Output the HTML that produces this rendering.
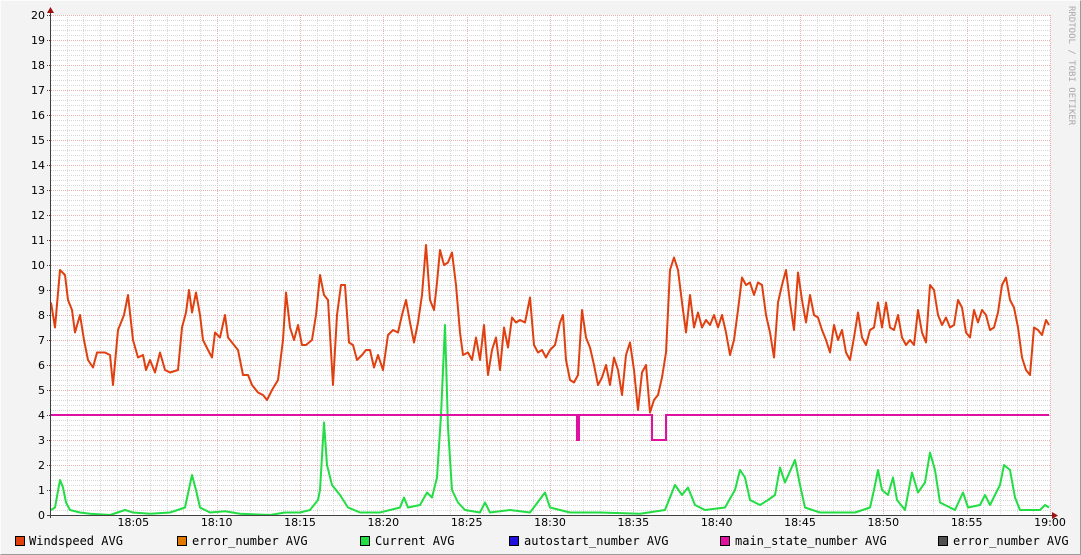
<!DOCTYPE html>
<html><head><meta charset="utf-8"><style>
html,body{margin:0;padding:0;background:#f3f3f3;}
svg{display:block}
</style></head><body>
<svg id="s" width="1081" height="555" xmlns="http://www.w3.org/2000/svg" font-family="DejaVu Sans, Liberation Sans, sans-serif">
<rect x="0" y="0" width="1081" height="555" fill="#f3f3f3"/>
<path d="M0.5 554.5V0.5H1080.5" fill="none" stroke="#fcfcfc"/>
<path d="M0.5 554.5H1080.5V0.5" fill="none" stroke="#9b9b9b"/>
<rect x="51" y="15" width="999" height="500" fill="#ffffff"/>
<g id="grid"></g>
<g transform="translate(0,515) scale(1,-25)" fill="none" stroke-width="2" stroke-linejoin="round">
<polyline vector-effect="non-scaling-stroke" stroke="#e04010" points="51,8.5 55,7.5 60,9.8 65,9.6 68,8.6 72,8.2 75,7.3 80,8 84,7 88,6.2 93,5.9 97,6.5 105,6.5 110,6.4 113,5.2 118,7.4 124,8 128,8.8 133,7 138,6.3 143,6.4 146,5.8 150,6.2 155,5.7 160,6.5 165,5.8 170,5.7 178,5.8 182,7.5 186,8.1 189,9 192,8.1 196,8.9 200,8 203,7 208,6.6 212,6.3 215,7.3 220,7.1 225,8 228,7.1 232,6.9 238,6.6 243,5.6 248,5.6 252,5.2 258,4.9 263,4.8 267,4.6 272,5 278,5.4 283,7 286,8.9 290,7.5 294,7 298,7.6 302,6.8 306,6.8 312,7 316,8 320,9.6 324,8.8 328,8.6 333,5.2 337,8 341,9.2 345,9.2 349,6.9 353,6.8 357,6.2 362,6.4 366,6.6 370,6.6 374,5.9 378,6.4 383,5.8 388,7.2 393,7.4 398,7.3 402,8 406,8.6 410,7.7 414,6.9 418,7.7 422,8.8 426,10.8 430,8.6 434,8.2 437,9.3 440,10.6 444,10 448,10.1 452,10.5 456,9.2 460,7.3 463,6.4 468,6.5 472,6.2 476,7.1 480,6.2 484,7.6 488,5.6 492,6.6 496,7.1 500,5.8 504,7.5 508,6.7 512,7.9 516,7.7 520,7.8 525,7.7 530,8.7 534,6.8 538,6.5 542,6.6 546,6.3 550,6.6 555,6.8 560,7.7 563,8 566,6.2 570,5.4 574,5.3 578,5.6 582,8.2 586,7.1 590,6.7 594,6 598,5.2 602,5.5 606,6 610,5.2 614,6.3 618,5.8 622,4.8 626,6.4 630,6.9 634,5.8 638,4.2 642,5.7 646,6 650,4.1 654,4.6 658,4.8 662,5.5 666,6.5 670,9.8 674,10.3 678,9.8 682,8.5 686,7.3 690,8.8 694,7.5 698,8.1 702,7.5 706,7.8 710,7.6 714,8 718,7.5 722,8 726,7.3 730,6.4 734,7 738,8.2 742,9.5 746,9.2 750,9.3 754,8.8 758,9.3 762,9.2 766,8 770,7.3 774,6.3 778,8.5 782,9.2 786,9.8 790,8.5 794,7.4 798,9.7 802,8.6 806,7.7 810,8.8 814,8 818,7.9 822,7.4 826,7 830,6.5 834,7.6 838,7 842,7.4 846,6.5 850,6.2 854,7.1 858,8.1 862,7.1 866,6.8 870,7.4 874,7.5 878,8.5 882,7.5 886,8.5 890,7.5 894,7.4 898,8 902,7.1 906,6.8 910,7 914,6.8 918,8.2 922,7.3 926,6.9 930,9.2 934,9 938,8 942,7.6 946,7.9 950,7.5 954,7.6 958,8.6 962,8.3 966,7.3 970,7.1 974,8.2 978,7.7 982,8.2 986,8 990,7.4 994,7.5 998,8.1 1002,9.2 1006,9.5 1010,8.6 1014,8.3 1018,7.5 1022,6.3 1026,5.8 1030,5.6 1034,7.5 1038,7.4 1042,7.2 1046,7.8 1049,7.6"/>
<polyline vector-effect="non-scaling-stroke" stroke="#22dd44" points="51,0.2 55,0.3 60,1.4 63,1.1 66,0.5 70,0.2 80,0.1 90,0.05 110,0 125,0.2 133,0.1 150,0.05 170,0.1 185,0.3 192,1.6 196,1 200,0.3 210,0.1 225,0.15 240,0.05 270,0 285,0.1 300,0.1 310,0.2 318,0.6 320,1 324,3.7 327,2 332,1.2 340,0.8 348,0.3 360,0.1 380,0.1 400,0.3 404,0.7 408,0.3 420,0.4 427,0.9 432,0.7 437,1.5 441,4 445,7.6 448,3.5 452,1 458,0.5 465,0.2 480,0.1 485,0.5 490,0.1 510,0.2 530,0.1 545,0.9 550,0.3 570,0.1 600,0.1 640,0.05 665,0.2 675,1.2 682,0.8 688,1.1 695,0.4 705,0.2 725,0.3 735,1 740,1.8 745,1.5 750,0.6 760,0.4 768,0.6 775,0.8 780,1.9 785,1.3 795,2.2 800,1.2 805,0.3 820,0.1 840,0.1 855,0.1 870,0.3 874,1 878,1.8 882,1 888,0.8 893,1.5 897,0.6 905,0.2 912,1.7 918,0.9 925,1.3 930,2.5 935,1.8 940,0.5 955,0.2 963,0.9 968,0.3 980,0.4 985,0.8 990,0.4 1000,1.2 1004,2 1010,1.8 1015,0.7 1020,0.2 1040,0.2 1045,0.4 1049,0.3"/>
<polyline vector-effect="non-scaling-stroke" stroke="#e010a0" stroke-linejoin="miter" points="51,4 577,4 577,3 579,3 579,4 652,4 652,3 666,3 666,4 1049,4"/>
</g>
<path d="M50.5 13V518M47 515.5H1054" stroke="#404040" stroke-width="1"/>
<path d="M47 13L50.5 7L54 13Z" fill="#a01010"/>
<path d="M1052 512L1058 515.5L1052 519Z" fill="#a01010"/>
<g id="yl" font-size="11" fill="#000" text-anchor="end"></g>
<g id="xl" font-size="11" fill="#000" text-anchor="middle"></g>
<text transform="translate(1069,6) rotate(90)" font-size="9" fill="#a8a8a8" font-family="DejaVu Sans Mono, Liberation Mono, monospace">RRDTOOL / TOBI OETIKER</text>
<g font-family="DejaVu Sans Mono, Liberation Mono, monospace" font-size="12" fill="#000">
<rect x="15.5" y="536.5" width="9" height="9" fill="#e04010" stroke="#000"/><text x="29" y="545">Windspeed AVG</text>
<rect x="177.5" y="536.5" width="9" height="9" fill="#e07800" stroke="#000"/><text x="192" y="545">error_number AVG</text>
<rect x="360.5" y="536.5" width="9" height="9" fill="#22dd44" stroke="#000"/><text x="375" y="545">Current AVG</text>
<rect x="509.5" y="536.5" width="9" height="9" fill="#2010e0" stroke="#000"/><text x="524" y="545">autostart_number AVG</text>
<rect x="720.5" y="536.5" width="9" height="9" fill="#e010a0" stroke="#000"/><text x="735" y="545">main_state_number AVG</text>
<rect x="938.5" y="536.5" width="9" height="9" fill="#505050" stroke="#000"/><text x="953" y="545">error_number AVG</text>
</g>
</svg>
<script>
var NS="http://www.w3.org/2000/svg",g=document.getElementById("grid");
function ln(x1,y1,x2,y2,c){var l=document.createElementNS(NS,"line");l.setAttribute("x1",x1);l.setAttribute("y1",y1);l.setAttribute("x2",x2);l.setAttribute("y2",y2);l.setAttribute("stroke",c);l.setAttribute("stroke-dasharray","1,1");g.appendChild(l);}
for(var i=1;i<=60;i++){var x=Math.round(50+i*1000/60)+0.5;ln(x,15,x,515,i%5==0?"#e8b0b0":"#d8d8d8");}
for(var j=1;j<=100;j++){var y=515-j*5+0.5;ln(51,y,1050,y,j%5==0?"#e8b0b0":"#d8d8d8");}
for(var k=0;k<=20;k++){var y=515-k*25;ln(47,y+0.5,51,y+0.5,"#404040");var t=document.createElementNS(NS,"text");t.setAttribute("x",45);t.setAttribute("y",y+4);t.textContent=k;document.getElementById("yl").appendChild(t);}
var lab=["18:05","18:10","18:15","18:20","18:25","18:30","18:35","18:40","18:45","18:50","18:55","19:00"];
for(var m=0;m<12;m++){var t=document.createElementNS(NS,"text");t.setAttribute("x",50+(m+1)*1000/12);t.setAttribute("y",526);t.textContent=lab[m];document.getElementById("xl").appendChild(t);}
</script>
</body></html>
